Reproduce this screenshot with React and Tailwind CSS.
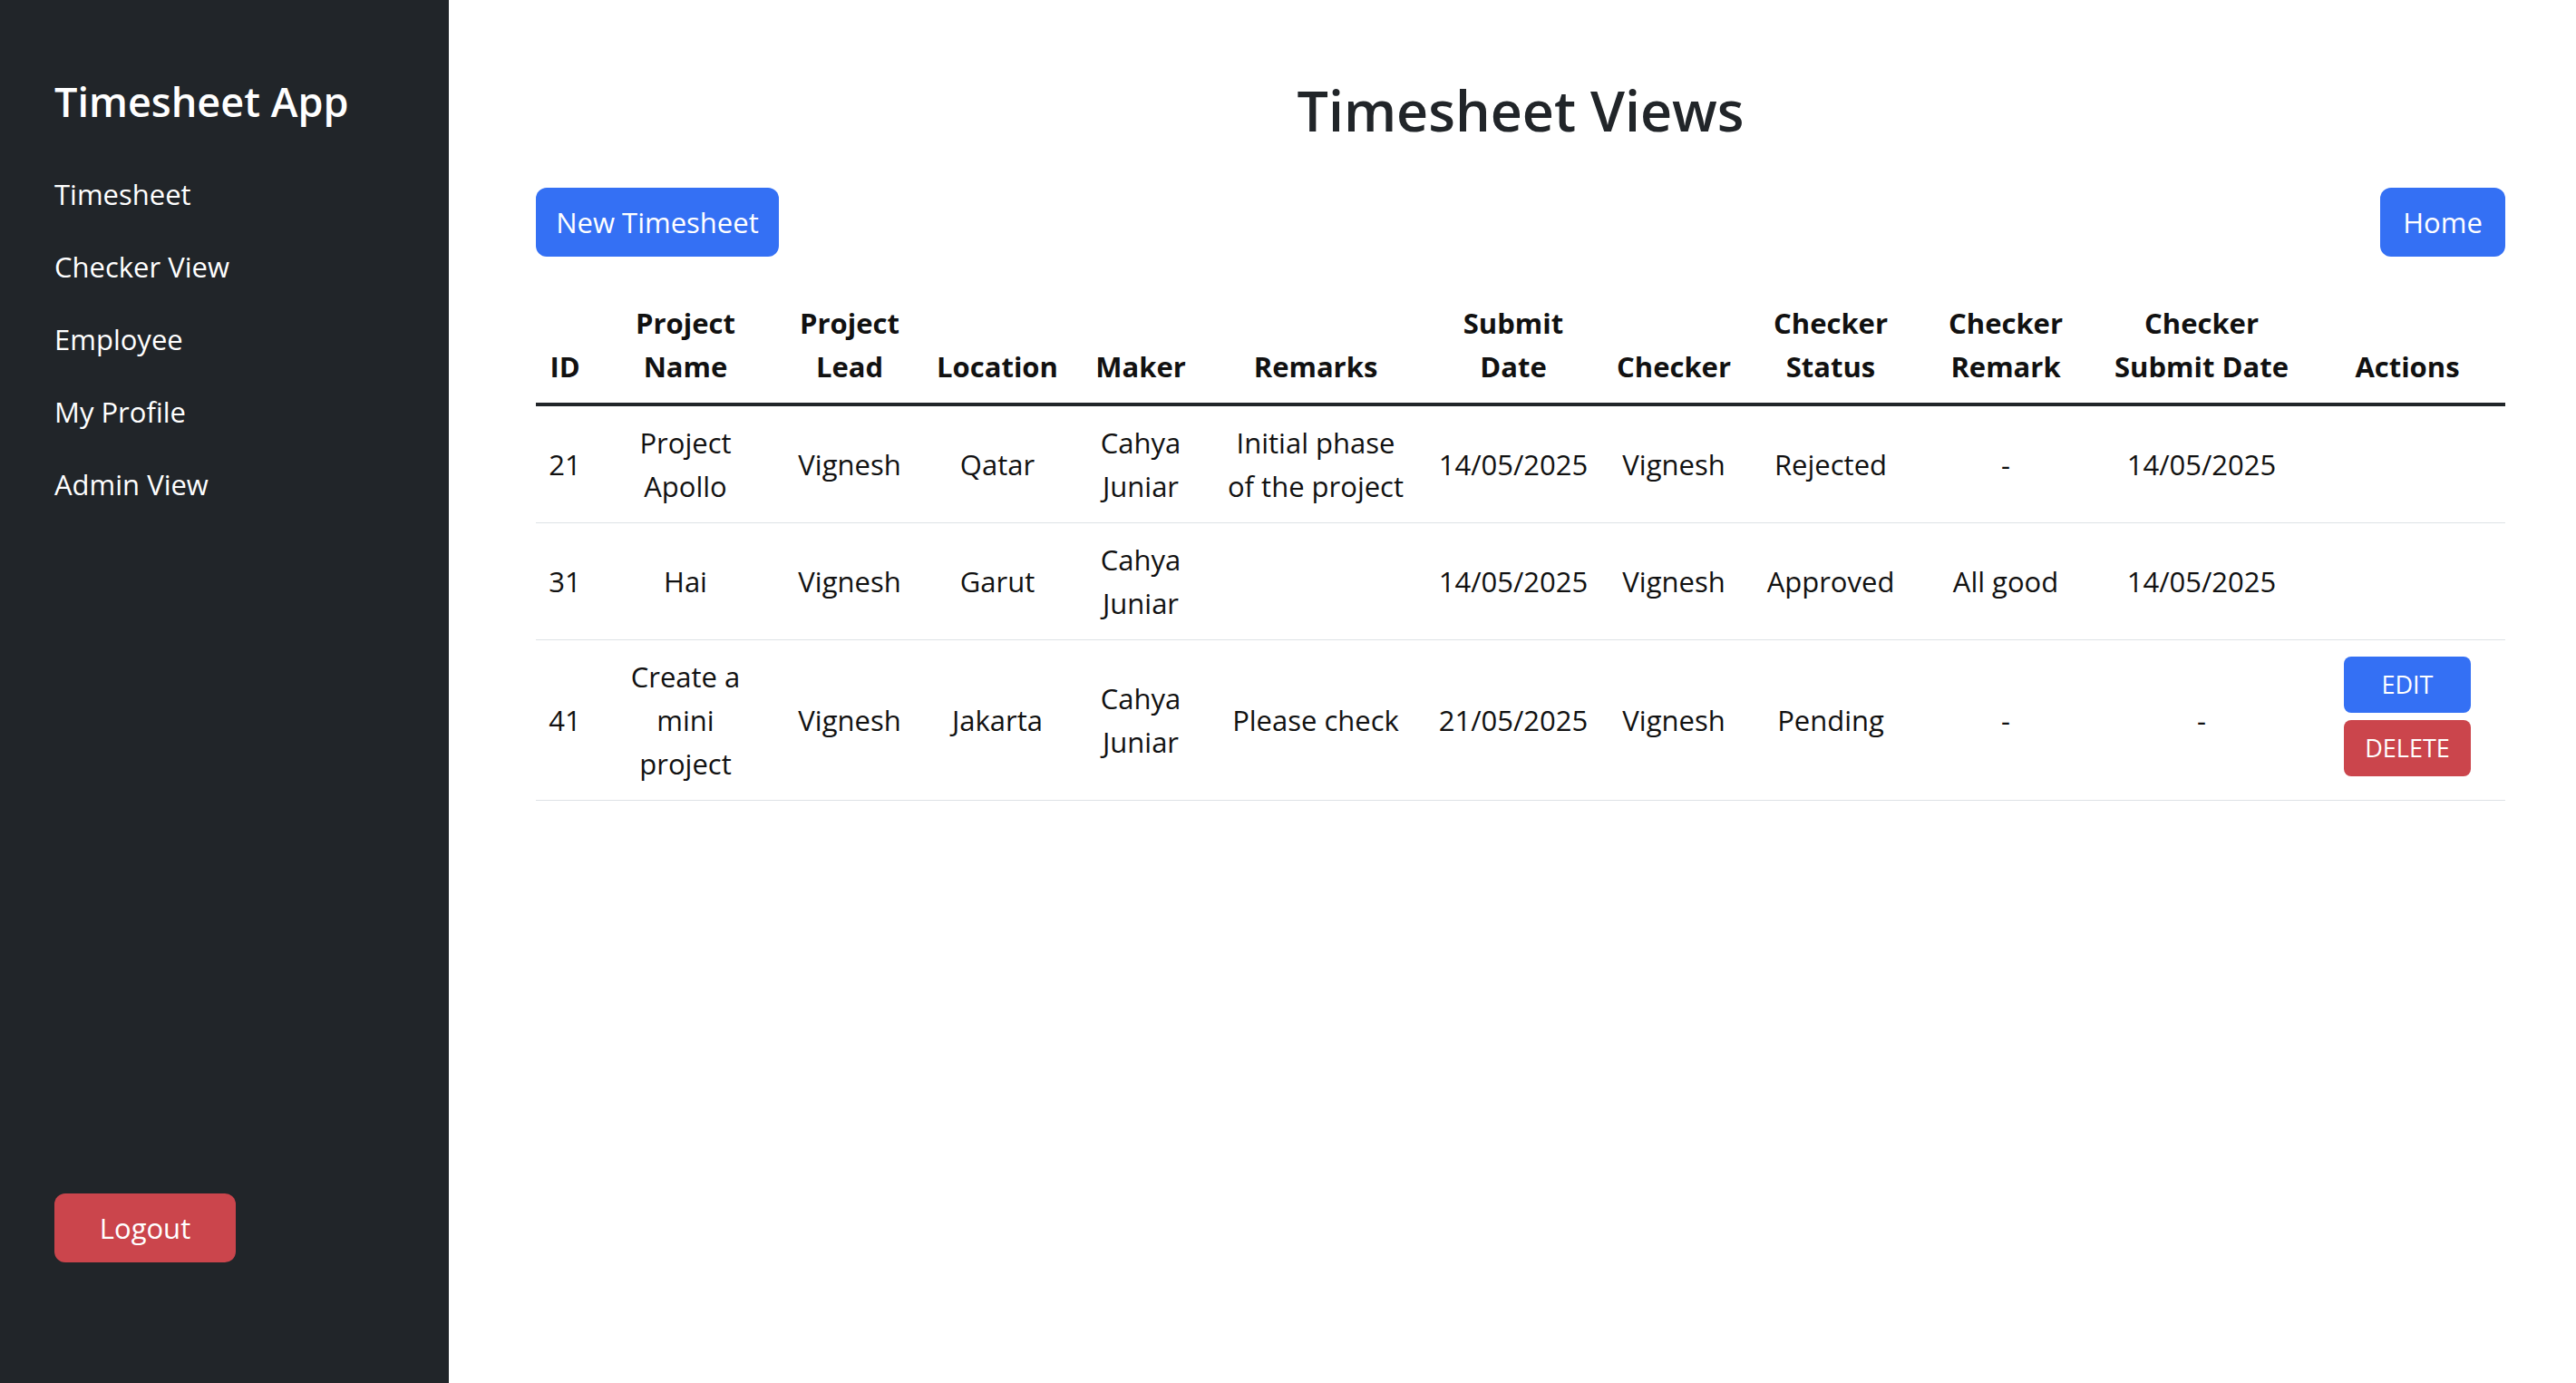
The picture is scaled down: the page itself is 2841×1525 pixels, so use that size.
import React from "react";

const headers = [
  "ID",
  "Project\nName",
  "Project\nLead",
  "Location",
  "Maker",
  "Remarks",
  "Submit\nDate",
  "Checker",
  "Checker\nStatus",
  "Checker\nRemark",
  "Checker\nSubmit Date",
  "Actions",
];

const colWidths = [64, 202, 160, 166, 150, 236, 200, 154, 192, 194, 238, 216];

const timesheets = [
  {
    id: 21,
    project: "Project\nApollo",
    lead: "Vignesh",
    location: "Qatar",
    maker: "Cahya\nJuniar",
    remarks: "Initial phase\nof the project",
    submitDate: "14/05/2025",
    checker: "Vignesh",
    status: "Rejected",
    checkerRemark: "-",
    checkerDate: "14/05/2025",
    editable: false,
  },
  {
    id: 31,
    project: "Hai",
    lead: "Vignesh",
    location: "Garut",
    maker: "Cahya\nJuniar",
    remarks: "",
    submitDate: "14/05/2025",
    checker: "Vignesh",
    status: "Approved",
    checkerRemark: "All good",
    checkerDate: "14/05/2025",
    editable: false,
  },
  {
    id: 41,
    project: "Create a\nmini\nproject",
    lead: "Vignesh",
    location: "Jakarta",
    maker: "Cahya\nJuniar",
    remarks: "Please check",
    submitDate: "21/05/2025",
    checker: "Vignesh",
    status: "Pending",
    checkerRemark: "-",
    checkerDate: "-",
    editable: true,
  },
];

function Sidebar() {
  return (
    <div className="w-[495px] shrink-0 bg-[#212529] text-white flex flex-col pl-[60px] pt-[84px] pb-[133px]">
      <h4 className="text-[45px] leading-[56px] font-semibold mb-[34px]">
        Timesheet App
      </h4>

      <nav className="flex flex-col">
        {["Timesheet", "Checker View", "Employee", "My Profile", "Admin View"].map((item) => (
          <a key={item} href="#" className="py-4 text-[31px] leading-[48px] text-white">
            {item}
          </a>
        ))}
      </nav>

      <button className="mt-auto w-[200px] h-[76px] rounded-[12px] bg-[#cb454c] text-white text-[31px] leading-[48px]">
        Logout
      </button>
    </div>
  );
}

function App() {
  return (
    <div
      className="flex min-h-screen bg-white"
      style={{ fontFamily: '"Open Sans", "Noto Sans", sans-serif' }}
    >
      <Sidebar />

      <div className="flex-1 pl-[96px] pr-[78px] pt-[85px]">

        <h2 className="text-center text-[61px] leading-[74px] font-semibold text-[#212529] mb-[48px]">
          Timesheet Views
        </h2>

        <div className="flex justify-between mb-[33px]">
          <button className="w-[268px] h-[76px] rounded-[12px] bg-[#3470f4] text-white text-[31px] leading-[48px]">
            New Timesheet
          </button>
          <button className="w-[138px] h-[76px] rounded-[12px] bg-[#3470f4] text-white text-[31px] leading-[48px]">
            Home
          </button>
        </div>

        <table className="w-full table-fixed border-collapse text-[31px] leading-[48px] text-[#111]">
          <colgroup>
            {colWidths.map((w, i) => (
              <col key={i} style={{ width: w }} />
            ))}
          </colgroup>

          <thead>
            <tr className="border-b-4 border-[#212529]">
              {headers.map((h) => (
                <th key={h} className="px-1 py-4 align-bottom text-center font-bold whitespace-pre">
                  {h}
                </th>
              ))}
            </tr>
          </thead>

          <tbody>
            {timesheets.map((t) => (
              <tr key={t.id} className="border-b border-[#dee2e6]">
                {[
                  t.id,
                  t.project,
                  t.lead,
                  t.location,
                  t.maker,
                  t.remarks,
                  t.submitDate,
                  t.checker,
                  t.status,
                  t.checkerRemark,
                  t.checkerDate,
                ].map((v, i) => (
                  <td key={i} className="px-1 py-4 align-middle text-center whitespace-pre">
                    {v}
                  </td>
                ))}
                <td className="px-1 py-4 align-middle text-center">
                  {t.editable && (
                    <div className="flex flex-col items-center">
                      <button className="w-[140px] h-[62px] mb-2 rounded-[8px] bg-[#3470f4] text-white text-[27px] leading-[42px]">
                        EDIT
                      </button>
                      <button className="w-[140px] h-[62px] mb-2 rounded-[8px] bg-[#cb454c] text-white text-[27px] leading-[42px]">
                        DELETE
                      </button>
                    </div>
                  )}
                </td>
              </tr>
            ))}
          </tbody>
        </table>

      </div>
    </div>
  );
}

export default App;
